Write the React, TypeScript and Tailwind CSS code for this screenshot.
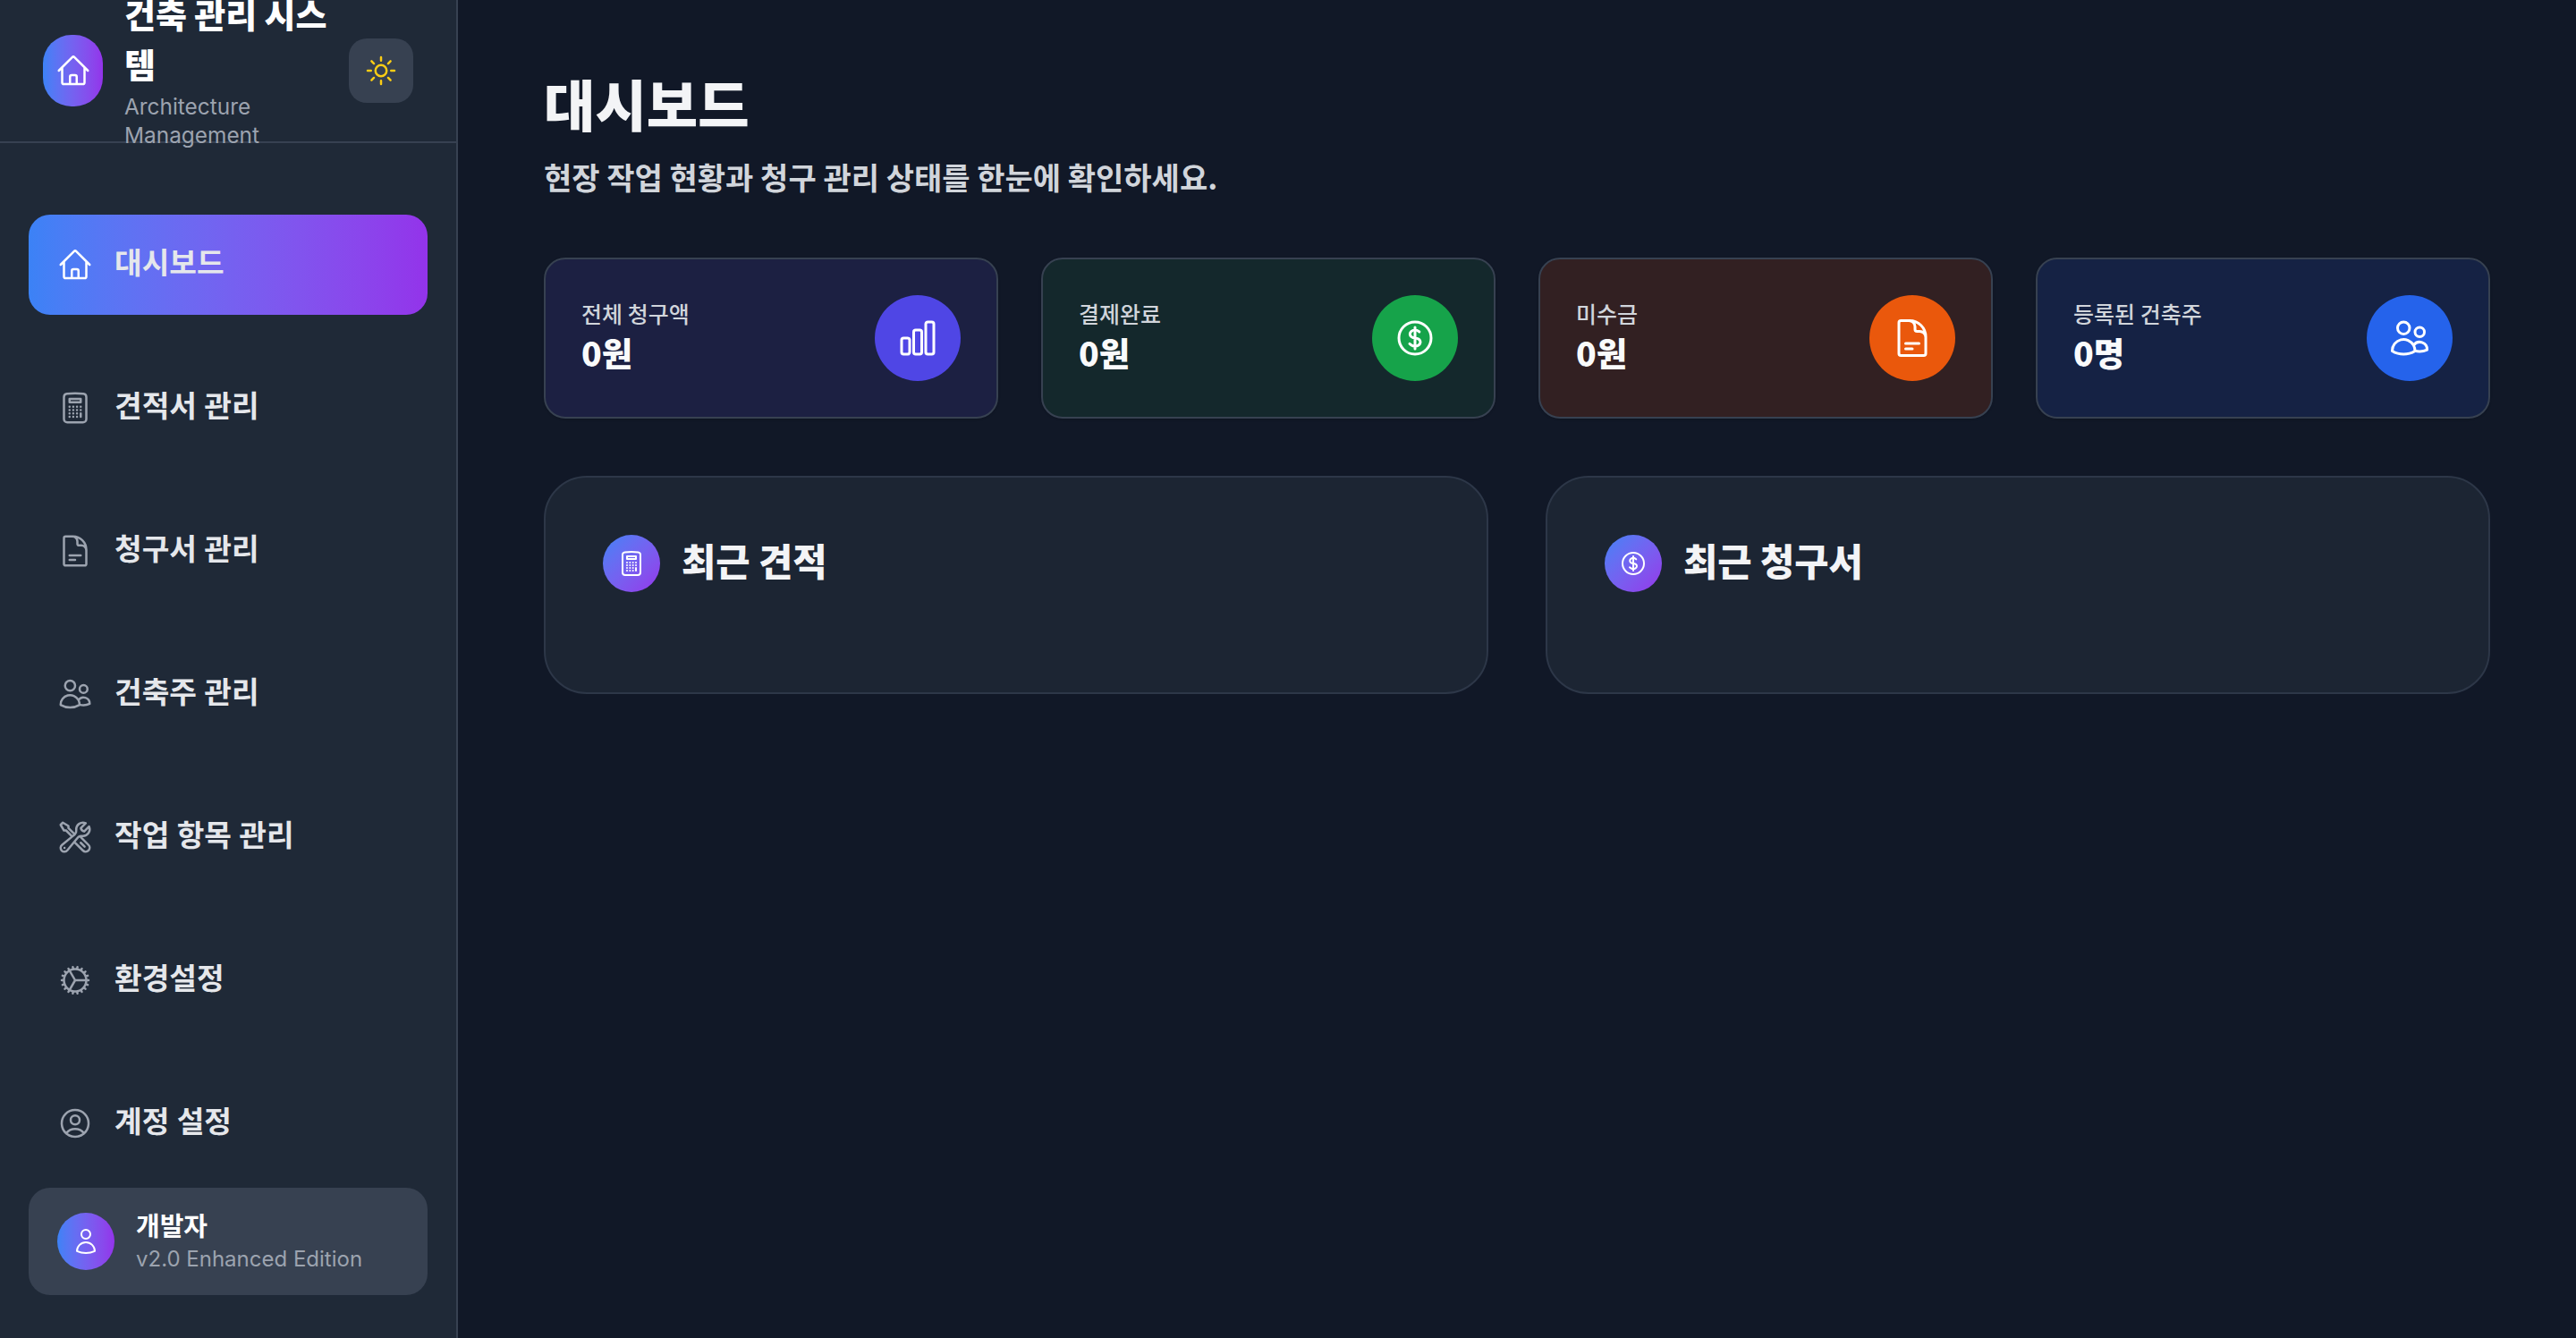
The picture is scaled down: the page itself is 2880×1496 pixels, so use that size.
import React from 'react';
import {
  HiOutlineHome,
  HiOutlineCalculator,
  HiOutlineDocumentText,
  HiOutlineUsers,
  HiOutlineWrenchScrewdriver,
  HiOutlineCog,
  HiOutlineUserCircle,
  HiOutlineSun,
  HiOutlineUser,
  HiOutlineChartBar,
  HiOutlineCurrencyDollar,
} from 'react-icons/hi2';

const navItems = [
  { label: '대시보드', icon: HiOutlineHome, active: true },
  { label: '견적서 관리', icon: HiOutlineCalculator },
  { label: '청구서 관리', icon: HiOutlineDocumentText },
  { label: '건축주 관리', icon: HiOutlineUsers },
  { label: '작업 항목 관리', icon: HiOutlineWrenchScrewdriver },
  { label: '환경설정', icon: HiOutlineCog },
  { label: '계정 설정', icon: HiOutlineUserCircle },
];

const stats = [
  { label: '전체 청구액', value: '0원', icon: HiOutlineChartBar, card: 'bg-[#1c2042]', circle: 'bg-[#4f46e5]' },
  { label: '결제완료', value: '0원', icon: HiOutlineCurrencyDollar, card: 'bg-[#14282c]', circle: 'bg-[#16a34a]' },
  { label: '미수금', value: '0원', icon: HiOutlineDocumentText, card: 'bg-[#322022]', circle: 'bg-[#ea580c]' },
  { label: '등록된 건축주', value: '0명', icon: HiOutlineUsers, card: 'bg-[#152244]', circle: 'bg-[#2563eb]' },
];

const sections = [
  { title: '최근 견적', icon: HiOutlineCalculator },
  { title: '최근 청구서', icon: HiOutlineCurrencyDollar },
];

function Sidebar() {
  return (
    <aside className="flex h-[1496px] w-[512px] shrink-0 flex-col border-r-2 border-[#374151] bg-[#1f2937]">
      {/* header content is taller than the bar, it spills over on purpose */}
      <div className="flex h-[160px] shrink-0 items-center justify-between border-b-2 border-[#374151] px-12">
        <div className="flex items-center gap-6">
          <div className="flex h-20 w-[67px] shrink-0 items-center justify-center rounded-[32px] bg-gradient-to-r from-[#3b82f6] to-[#9333ea]">
            <HiOutlineHome className="h-10 w-10 text-white" />
          </div>
          <div className="w-[240px]">
            <h1 className="-translate-y-[2px] text-[38px] leading-[56px] font-extrabold text-white">건축 관리 시스템</h1>
            <p className="text-[24.4px] leading-[32px] text-[#9ca3af]">Architecture Management</p>
          </div>
        </div>
        <button className="flex h-[72px] w-[72px] shrink-0 items-center justify-center rounded-[20px] bg-[#374151]">
          <HiOutlineSun className="h-10 w-10 text-[#facc15]" />
        </button>
      </div>

      <nav className="flex flex-col gap-12 px-8 pt-20">
        {navItems.map((item) => (
          <a
            key={item.label}
            className={`flex h-[112px] items-center gap-6 rounded-3xl px-8 text-[33.3px] leading-[48px] font-semibold text-[#e5e7eb] ${
              item.active ? 'bg-gradient-to-r from-[#3b82f6] to-[#9333ea]' : ''
            }`}
          >
            <item.icon className={`h-10 w-10 shrink-0 ${item.active ? 'text-white' : 'text-[#9ca3af]'}`} />
            <span className="-translate-y-[2px]">{item.label}</span>
          </a>
        ))}
      </nav>

      <div className="mx-8 mt-4 flex items-center gap-6 rounded-3xl bg-[#374151] px-8 py-6">
        <div className="flex h-16 w-16 shrink-0 items-center justify-center rounded-full bg-gradient-to-r from-[#3b82f6] to-[#9333ea]">
          <HiOutlineUser className="h-8 w-8 text-white" />
        </div>
        <div>
          <p className="text-[29px] leading-[40px] font-semibold text-white">개발자</p>
          <p className="text-[24px] leading-[32px] text-[#9ca3af]">v2.0 Enhanced Edition</p>
        </div>
      </div>
    </aside>
  );
}

export default function App() {
  return (
    <div className="flex h-[1496px] w-[2880px] overflow-hidden bg-[#111827] font-['Inter','Noto_Sans_CJK_KR',sans-serif]">
      <Sidebar />

      <main className="flex-1 px-24 py-20 font-['Noto_Sans_CJK_KR',sans-serif]">
        <h2 className="-translate-y-[1px] text-[62.4px] leading-[72px] font-extrabold text-[#f3f4f6]">대시보드</h2>
        <p className="mt-[22px] text-[34px] leading-[48px] font-semibold text-[#d1d5db]">
          현장 작업 현황과 청구 관리 상태를 한눈에 확인하세요.
        </p>

        <div className="mt-[66px] grid grid-cols-4 gap-12">
          {stats.map((stat) => (
            <div
              key={stat.label}
              className={`flex items-center justify-between rounded-3xl border-2 border-[#374151] p-10 shadow-sm ${stat.card}`}
            >
              <div className="pb-1">
                <p className="text-[25px] leading-[36px] font-medium text-[#d1d5db]">{stat.label}</p>
                <p className="text-[37.4px] leading-[52px] font-extrabold text-[#f9fafb]">{stat.value}</p>
              </div>
              <div className={`flex h-24 w-24 items-center justify-center rounded-full ${stat.circle}`}>
                <stat.icon className="h-12 w-12 text-white" />
              </div>
            </div>
          ))}
        </div>

        <div className="mt-16 grid grid-cols-2 gap-16">
          {sections.map((section) => (
            <section key={section.title} className="rounded-[48px] border-2 border-[#2d3748] bg-[#1c2533] p-16">
              <div className="mb-12 flex items-center gap-6">
                <div className="flex h-16 w-16 items-center justify-center rounded-full bg-gradient-to-br from-[#3b82f6] to-[#9333ea]">
                  <section.icon className="h-8 w-8 text-white" />
                </div>
                <h3 className="-translate-y-[4px] text-[41.6px] leading-[56px] font-extrabold text-[#f3f4f6]">{section.title}</h3>
              </div>
            </section>
          ))}
        </div>
      </main>
    </div>
  );
}
